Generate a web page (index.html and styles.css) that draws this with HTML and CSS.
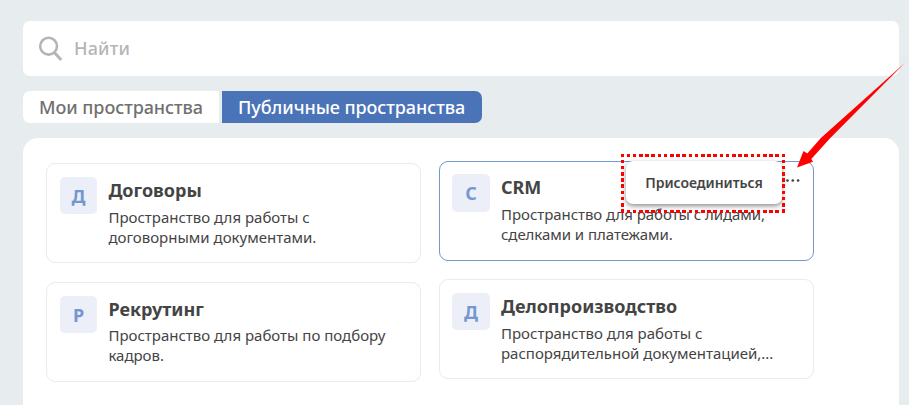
FILE: index.html
```html
<!DOCTYPE html>
<html lang="ru">
<head>
<meta charset="utf-8">
<title>Пространства</title>
<link rel="stylesheet" href="styles.css">
</head>
<body>
<main class="page">
  <div class="search">
    <svg class="search-icon" width="25" height="26" viewBox="0 0 25 26" fill="none" stroke="#b5b5b5"><circle cx="10.6" cy="10.2" r="8.4" stroke-width="2.6"/><path d="M16.4 16.6L23.2 23.9" stroke-width="3"/></svg>
    <span class="search-text">Найти</span>
  </div>
  <nav class="tabs">
    <button class="tab"><span>Мои пространства</span></button>
    <button class="tab tab-active"><span>Публичные пространства</span></button>
  </nav>
  <section class="panel">
    <div class="column">
      <article class="card">
        <div class="avatar">Д</div>
        <div class="body"><h2>Договоры</h2><p>Пространство для работы с<br>договорными документами.</p></div>
      </article>
      <article class="card card-tight">
        <div class="avatar">Р</div>
        <div class="body"><h2>Рекрутинг</h2><p>Пространство для работы по подбору<br>кадров.</p></div>
      </article>
    </div>
    <div class="column column-right">
      <article class="card card-selected">
        <div class="avatar">C</div>
        <div class="body"><h2>CRM</h2><p>Пространство для работы с лидами,<br>сделками и платежами.</p></div>
        <svg class="dots" width="14" height="3" viewBox="0 0 14 3" fill="#444"><circle cx="1.5" cy="1.5" r="1.35"/><circle cx="6.8" cy="1.5" r="1.35"/><circle cx="12.1" cy="1.5" r="1.35"/></svg>
        <div class="menu">Присоединиться</div>
      </article>
      <article class="card">
        <div class="avatar">Д</div>
        <div class="body"><h2>Делопроизводство</h2><p>Пространство для работы с<br>распорядительной документацией,...</p></div>
      </article>
    </div>
  </section>
</main>
<svg class="marks" width="909" height="405" viewBox="0 0 909 405">
  <g stroke="#f00" stroke-width="3" stroke-dasharray="3.6 2.6" stroke-dashoffset=".6" shape-rendering="crispEdges">
    <path d="M621 155.5H785M621 211.5H785M622.5 154V213M783.5 154V213"/>
  </g>
  <path d="M797 167.5L803.5 151L807.3 153.5L820.9 138L904.8 63L830.3 138L811.3 159L813 161.8Z" fill="#f00"/>
</svg>
</body>
</html>
```
FILE: styles.css
```css
* { box-sizing: border-box; }
body { margin: 0; background: #e7ecef; font-family: "Noto Sans", "Open Sans", sans-serif; color: #444; }
.page { height: 405px; overflow: hidden; padding: 21px 10px 0 23px; display: flex; flex-direction: column; }
.search { flex: none; height: 55px; background: #fff; border-radius: 7px; display: flex; align-items: center; padding-left: 15px; gap: 11px; }
.search-text { font-size: 18px; font-weight: 500; color: #b5b5b5; letter-spacing: .15px; position: relative; top: -1px; }
.tabs { flex: none; display: flex; gap: 3px; margin-top: 15px; height: 32px; }
.tab { border: 0; padding: 0 0 0 16px; width: 196px; background: #fff; border-radius: 7px 0 0 7px; font: 500 18px "Noto Sans", sans-serif; letter-spacing: -.06px; color: #707070; text-align: left; white-space: nowrap; }
.tab-active { width: 260px; background: #4b74b8; color: #fff; border-radius: 0 7px 7px 0; }
.panel { margin-top: 15px; flex: 1; background: #fff; border-radius: 15px 15px 0 0; padding: 25px 0 0 23px; display: flex; gap: 18px; }
.column { width: 375px; display: flex; flex-direction: column; gap: 19px; }
.column-right { margin-top: -2px; gap: 18px; }
.card { flex: none; position: relative; height: 100px; border: 1px solid #e7ecee; border-radius: 9px; padding: 13px; display: flex; gap: 11px; }
.card-selected { border-color: #7597cf; }
.column-right .card { padding-left: 12px; }
.card-selected { padding-top: 12px; }
.avatar { flex: none; width: 37px; height: 37px; border-radius: 5px; background: #eceff8; color: #7597cf; font-size: 18px; font-weight: 700; display: flex; align-items: center; justify-content: center; }
.column-right .avatar { width: 38px; }
.card-selected .avatar { height: 38px; }
.body { white-space: nowrap; }
.column:first-child .card { gap: 11.4px; }
h2 { margin: 0; font-size: 18px; line-height: 26px; font-weight: 700; }
p { margin: 4px 0 0; font-size: 15px; line-height: 20px; }
.card-tight p { margin-top: 3px; }
.card-selected p { letter-spacing: -.05px; }
.dots { position: absolute; right: 13px; top: 17px; }
.menu { position: absolute; left: 186px; top: -1px; width: 156px; height: 43px; border-radius: 7px; background: #fff; box-shadow: 0 2px 5px rgba(0,0,0,.45); font-size: 14px; font-weight: 600; letter-spacing: -.06px; display: flex; align-items: center; justify-content: center; white-space: nowrap; }
.marks { position: absolute; left: 0; top: 0; pointer-events: none; }
```
